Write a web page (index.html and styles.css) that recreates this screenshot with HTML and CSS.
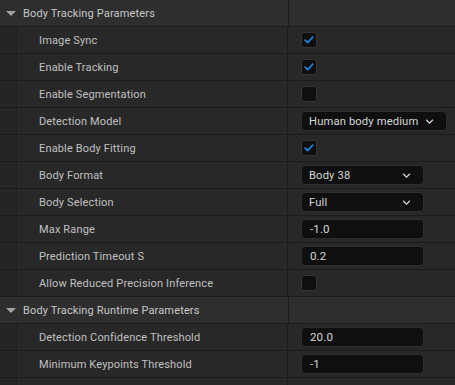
FILE: index.html
```html
<!DOCTYPE html>
<html>

<head>
  <meta name="viewport" content="width=device-width, initial-scale=1.0">
  <link rel="stylesheet" href="styles.css">
</head>

<body>
  <div class="panel">
    <div class="row header">
      <div class="name"><span class="arrow"></span>Body Tracking Parameters</div>
      <div class="value"></div>
    </div>
    <div class="row">
      <div class="indent"></div>
      <div class="name">Image Sync</div>
      <div class="value"><span class="check on"><svg viewBox="0 0 16 16"><path d="M3.5 8.2 L6.5 11 L12.2 4.8"/></svg></span></div>
    </div>
    <div class="row">
      <div class="indent"></div>
      <div class="name">Enable Tracking</div>
      <div class="value"><span class="check on"><svg viewBox="0 0 16 16"><path d="M3.5 8.2 L6.5 11 L12.2 4.8"/></svg></span></div>
    </div>
    <div class="row">
      <div class="indent"></div>
      <div class="name">Enable Segmentation</div>
      <div class="value"><span class="check"></span></div>
    </div>
    <div class="row">
      <div class="indent"></div>
      <div class="name">Detection Model</div>
      <div class="value"><div class="combo">Human body medium<svg class="chev" viewBox="0 0 10 6"><path d="M1 1 L5 5 L9 1"/></svg></div></div>
    </div>
    <div class="row">
      <div class="indent"></div>
      <div class="name">Enable Body Fitting</div>
      <div class="value"><span class="check on"><svg viewBox="0 0 16 16"><path d="M3.5 8.2 L6.5 11 L12.2 4.8"/></svg></span></div>
    </div>
    <div class="row">
      <div class="indent"></div>
      <div class="name">Body Format</div>
      <div class="value"><div class="combo">Body 38<svg class="chev" viewBox="0 0 10 6"><path d="M1 1 L5 5 L9 1"/></svg></div></div>
    </div>
    <div class="row">
      <div class="indent"></div>
      <div class="name">Body Selection</div>
      <div class="value"><div class="combo">Full<svg class="chev" viewBox="0 0 10 6"><path d="M1 1 L5 5 L9 1"/></svg></div></div>
    </div>
    <div class="row">
      <div class="indent"></div>
      <div class="name">Max Range</div>
      <div class="value"><div class="field">-1.0</div></div>
    </div>
    <div class="row">
      <div class="indent"></div>
      <div class="name">Prediction Timeout S</div>
      <div class="value"><div class="field">0.2</div></div>
    </div>
    <div class="row">
      <div class="indent"></div>
      <div class="name">Allow Reduced Precision Inference</div>
      <div class="value"><span class="check"></span></div>
    </div>
    <div class="row header">
      <div class="name"><span class="arrow"></span>Body Tracking Runtime Parameters</div>
      <div class="value"></div>
    </div>
    <div class="row">
      <div class="indent"></div>
      <div class="name">Detection Confidence Threshold</div>
      <div class="value"><div class="field">20.0</div></div>
    </div>
    <div class="row">
      <div class="indent"></div>
      <div class="name">Minimum Keypoints Threshold</div>
      <div class="value"><div class="field">-1</div></div>
    </div>
    <div class="row tail">
      <div class="indent"></div>
      <div class="name"></div>
      <div class="value"></div>
    </div>
  </div>
</body>

</html>
```

FILE: styles.css
```css
body {
  margin: 0;
  padding: 0;
  background-color: #1a1a1a;
  font-family: Roboto, 'Noto Sans', sans-serif;
  font-size: 11px;
  letter-spacing: 0.15px;
  color: #c0c0c0;
}

.panel {
  display: flex;
  flex-direction: column;
}

.row {
  display: flex;
  height: 26px;
  border-bottom: 1px solid #1c1c1c;
  background-color: #282828;
}

.row.tail {
  height: 7px;
  border-bottom: none;
}

.indent {
  width: 16px;
  flex-shrink: 0;
  background-color: #252525;
  border-right: 1px solid #1e1e1e;
}

.name {
  width: 271px;
  flex-shrink: 0;
  display: flex;
  align-items: center;
  padding-left: 22px;
  box-sizing: border-box;
  border-right: 1px solid #1c1c1c;
  white-space: nowrap;
}

.header {
  background-color: #2e2e2e;
}

.header .name {
  width: 289px;
  padding-left: 6px;
  color: #c8c8c8;
}

.arrow {
  width: 0;
  height: 0;
  border-left: 5px solid transparent;
  border-right: 5px solid transparent;
  border-top: 5px solid #a2a2a2;
  margin-right: 7px;
}

.value {
  flex: 1;
  display: flex;
  align-items: center;
  padding-left: 13px;
}

.check {
  width: 14px;
  height: 14px;
  border: 1px solid #343434;
  border-radius: 3px;
  background-color: #0f0f0f;
  display: flex;
}

.check svg {
  width: 14px;
  height: 14px;
  fill: none;
  stroke: #1f7ddc;
  stroke-width: 2;
  stroke-linecap: round;
  stroke-linejoin: round;
}

.combo {
  min-width: 123px;
  height: 20px;
  box-sizing: border-box;
  display: flex;
  align-items: center;
  justify-content: space-between;
  gap: 7px;
  padding: 0 12px 0 7px;
  background-color: #0f0f0f;
  border: 1px solid #2e2e2e;
  border-radius: 4px;
  color: #d6d6d6;
  font-size: 11.2px;
}

.chev {
  width: 9px;
  height: 5px;
  fill: none;
  stroke: #cfcfcf;
  stroke-width: 1.6;
}

.field {
  width: 123px;
  height: 20px;
  box-sizing: border-box;
  display: flex;
  align-items: center;
  padding-left: 8px;
  background-color: #0f0f0f;
  border: 1px solid #2e2e2e;
  border-radius: 4px;
  color: #d6d6d6;
  font-size: 11.5px;
}
```
